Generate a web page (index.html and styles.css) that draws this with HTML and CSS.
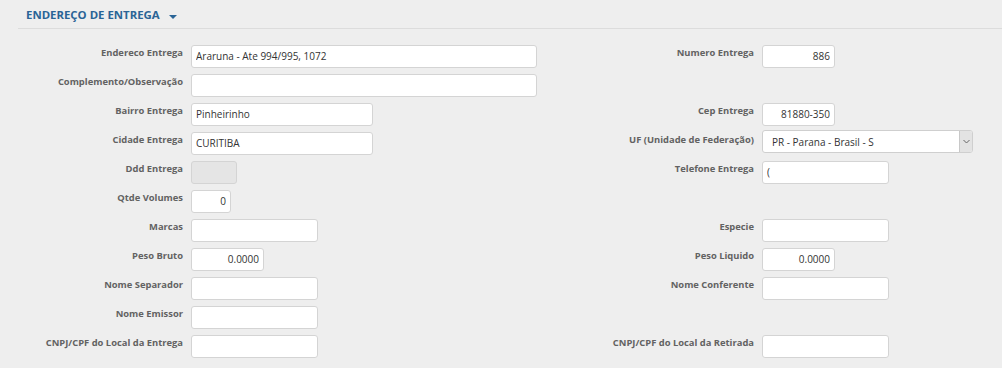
FILE: index.html
```html
<!DOCTYPE html>
<html lang="pt-BR">

<head>
  <meta charset="UTF-8">
  <meta name="viewport" content="width=device-width, initial-scale=1.0">
  <title>Endereço de Entrega</title>
  <link rel="stylesheet" href="styles.css">
</head>

<body>
  <div class="section-title">
    <span>ENDEREÇO DE ENTREGA</span>
    <span class="caret"></span>
  </div>

  <div class="form-grid">
    <label>Endereco Entrega</label>
    <div><input type="text" class="w-full" value="Araruna - Ate 994/995, 1072"></div>
    <label>Numero Entrega</label>
    <div><input type="text" class="w-xs num" value="886"></div>

    <label>Complemento/Observação</label>
    <div><input type="text" class="w-full"></div>
    <label></label>
    <div></div>

    <label>Bairro Entrega</label>
    <div><input type="text" class="w-md" value="Pinheirinho"></div>
    <label>Cep Entrega</label>
    <div><input type="text" class="w-xs num" value="81880-350"></div>

    <label>Cidade Entrega</label>
    <div><input type="text" class="w-md" value="CURITIBA"></div>
    <label>UF (Unidade de Federação)</label>
    <div>
      <div class="select">
        <span>PR - Parana - Brasil - S</span>
        <span class="select-btn">
          <svg width="7" height="5" viewBox="0 0 7 5"><path d="M0.5 1 L3.5 4 L6.5 1" fill="none" stroke="#666" stroke-width="1"/></svg>
        </span>
      </div>
    </div>

    <label>Ddd Entrega</label>
    <div><input type="text" class="w-ddd" disabled></div>
    <label>Telefone Entrega</label>
    <div><input type="text" class="w-sm" value="("></div>

    <label>Qtde Volumes</label>
    <div><input type="text" class="w-qt num" value="0"></div>
    <label></label>
    <div></div>

    <label>Marcas</label>
    <div><input type="text" class="w-sm"></div>
    <label>Especie</label>
    <div><input type="text" class="w-sm"></div>

    <label>Peso Bruto</label>
    <div><input type="text" class="w-xs num" value="0.0000"></div>
    <label>Peso Liquido</label>
    <div><input type="text" class="w-xs num" value="0.0000"></div>

    <label>Nome Separador</label>
    <div><input type="text" class="w-sm"></div>
    <label>Nome Conferente</label>
    <div><input type="text" class="w-sm"></div>

    <label>Nome Emissor</label>
    <div><input type="text" class="w-sm"></div>
    <label></label>
    <div></div>

    <label>CNPJ/CPF do Local da Entrega</label>
    <div><input type="text" class="w-sm"></div>
    <label>CNPJ/CPF do Local da Retirada</label>
    <div><input type="text" class="w-sm"></div>
  </div>
</body>

</html>
```

FILE: styles.css
```css
body {
  margin: 0;
  padding: 0;
  font-family: "Open Sans", Arial, sans-serif;
  background: #eeeeee;
  color: #333;
  height: 368px;
  overflow: hidden;
}

.section-title {
  margin-left: 18px;
  padding: 2px 0 0 8px;
  height: 26px;
  border-bottom: 1px solid #dcdcdc;
  display: flex;
  align-items: center;
  gap: 9px;
  font-size: 11.4px;
  font-weight: bold;
  color: #2a6496;
  line-height: 26px;
}

.caret {
  width: 0;
  height: 0;
  border-left: 4px solid transparent;
  border-right: 4px solid transparent;
  border-top: 4px solid #2a6496;
  margin-top: 4px;
}

.form-grid {
  display: grid;
  grid-template-columns: 183px 379px 176px 1fr;
  column-gap: 8px;
  row-gap: 6px;
  padding-top: 14px;
}

.form-grid label {
  text-align: right;
  font-size: 9.4px;
  font-weight: bold;
  color: #626262;
  line-height: 15px;
  padding-top: 2px;
  white-space: nowrap;
}

.form-grid > div {
  height: 23px;
}

input {
  box-sizing: border-box;
  height: 23px;
  padding: 0 4px;
  border: 1px solid #d4d4d4;
  border-radius: 3px;
  background: #fff;
  font-family: "Open Sans", Arial, sans-serif;
  font-size: 10px;
  color: #333;
  outline: none;
}

input:disabled {
  background: #e5e5e5;
}

.num {
  text-align: right;
}

.w-full {
  width: 346px;
}

.w-md {
  width: 182px;
}

.w-sm {
  width: 127px;
}

.w-xs {
  width: 73px;
}

.w-ddd {
  width: 46px;
}

.w-qt {
  width: 40px;
}

.select {
  box-sizing: border-box;
  width: 211px;
  height: 23px;
  border: 1px solid #cfcfcf;
  border-radius: 3px;
  background: #fff;
  display: flex;
  align-items: center;
  font-size: 10px;
  color: #333;
  overflow: hidden;
}

.select span:first-child {
  flex: 1;
  padding-left: 9px;
}

.select-btn {
  width: 12px;
  height: 21px;
  background: #e3e3e3;
  border-left: 1px solid #c8c8c8;
  display: flex;
  align-items: center;
  justify-content: center;
}
```
